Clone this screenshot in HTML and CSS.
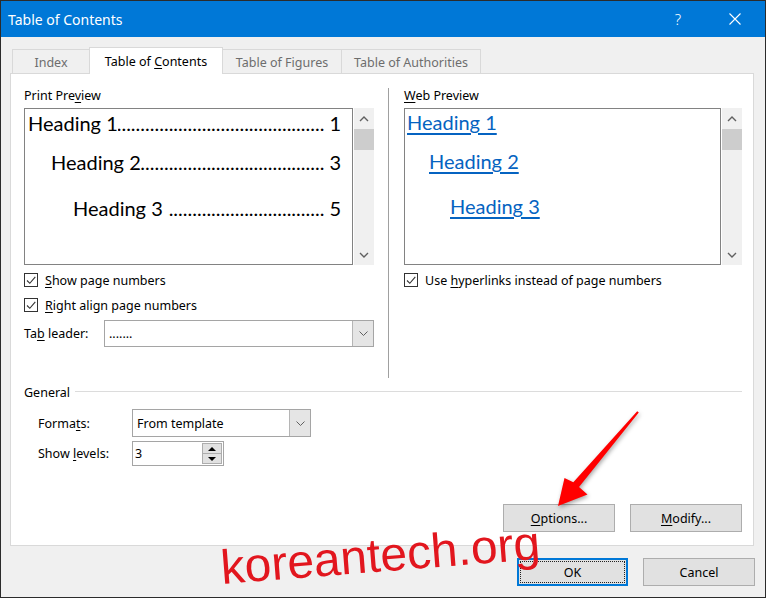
FILE: index.html
```html
<!DOCTYPE html>
<html>
<head>
<meta charset="utf-8">
<link rel="stylesheet" href="styles.css">
</head>
<body>
<div class="window">
  <div class="titlebar">
    <span class="title">Table of Contents</span>
    <div class="tb-btns">
      <span class="tb-btn help">?</span>
      <span class="tb-btn"><svg width="12" height="12" viewBox="0 0 12 12"><path d="M0.5 0.5 L11.5 11.5 M11.5 0.5 L0.5 11.5" stroke="#fff" stroke-width="1.1" fill="none"/></svg></span>
    </div>
  </div>
  <div class="client">
    <div class="tabs">
      <div class="tab t-index"><span>Index</span></div>
      <div class="tab active t-toc"><span>Table of <u>C</u>ontents</span></div>
      <div class="tab t-tof"><span>Table of Figures</span></div>
      <div class="tab t-toa"><span>Table of Authorities</span></div>
    </div>
    <div class="panel">
      <div class="top">
        <div class="col col-left">
          <div class="label">Print Pre<u>v</u>iew</div>
          <div class="preview">
            <div class="pbox toc">
              <div class="toc-row"><span class="hd">Heading 1</span><span class="leader"></span><span class="pg">1</span></div>
              <div class="toc-row l2"><span class="hd">Heading 2</span><span class="leader"></span><span class="pg">3</span></div>
              <div class="toc-row l3"><span class="hd">Heading 3</span><span class="leader sp"></span><span class="pg">5</span></div>
            </div>
            <div class="scroll">
              <div class="sarrow"><svg width="10" height="6" viewBox="0 0 10 6"><path d="M1 5 L5 1 L9 5" stroke="#606060" stroke-width="1.4" fill="none"/></svg></div>
              <div class="thumb"></div>
              <div class="strack"></div>
              <div class="sarrow"><svg width="10" height="6" viewBox="0 0 10 6"><path d="M1 1 L5 5 L9 1" stroke="#606060" stroke-width="1.4" fill="none"/></svg></div>
            </div>
          </div>
          <div class="chk row1"><span class="box"><svg width="12" height="12" viewBox="0 0 12 12"><path d="M2 6.5 L4.8 9.3 L10.3 2.8" stroke="#333" stroke-width="1.1" fill="none"/></svg></span><span><u>S</u>how page numbers</span></div>
          <div class="chk row2"><span class="box"><svg width="12" height="12" viewBox="0 0 12 12"><path d="M2 6.5 L4.8 9.3 L10.3 2.8" stroke="#333" stroke-width="1.1" fill="none"/></svg></span><span><u>R</u>ight align page numbers</span></div>
          <div class="leader-row">
            <span class="tl-label">Ta<u>b</u> leader:</span>
            <div class="select tl-select">
              <span class="val">.......</span>
              <span class="dd"><svg width="9" height="5" viewBox="0 0 9 5"><path d="M0.5 0.5 L4.5 4.5 L8.5 0.5" stroke="#606060" stroke-width="1" fill="none"/></svg></span>
            </div>
          </div>
        </div>
        <div class="sep"></div>
        <div class="col col-right">
          <div class="label"><u>W</u>eb Preview</div>
          <div class="preview">
            <div class="pbox web">
              <div class="w-row"><a>Heading 1</a></div>
              <div class="w-row l2"><a>Heading 2</a></div>
              <div class="w-row l3"><a>Heading 3</a></div>
            </div>
            <div class="scroll">
              <div class="sarrow"><svg width="10" height="6" viewBox="0 0 10 6"><path d="M1 5 L5 1 L9 5" stroke="#606060" stroke-width="1.4" fill="none"/></svg></div>
              <div class="thumb"></div>
              <div class="strack"></div>
              <div class="sarrow"><svg width="10" height="6" viewBox="0 0 10 6"><path d="M1 1 L5 5 L9 1" stroke="#606060" stroke-width="1.4" fill="none"/></svg></div>
            </div>
          </div>
          <div class="chk row1"><span class="box"><svg width="12" height="12" viewBox="0 0 12 12"><path d="M2 6.5 L4.8 9.3 L10.3 2.8" stroke="#333" stroke-width="1.1" fill="none"/></svg></span><span>Use <u>h</u>yperlinks instead of page numbers</span></div>
        </div>
      </div>
      <div class="general">
        <div class="ghead"><span>General</span><span class="gline"></span></div>
        <div class="frow formats">
          <span class="flabel">Forma<u>t</u>s:</span>
          <div class="select f-select">
            <span class="val">From template</span>
            <span class="dd"><svg width="9" height="5" viewBox="0 0 9 5"><path d="M0.5 0.5 L4.5 4.5 L8.5 0.5" stroke="#606060" stroke-width="1" fill="none"/></svg></span>
          </div>
        </div>
        <div class="frow levels">
          <span class="flabel">Show <u>l</u>evels:</span>
          <div class="spin">
            <span class="val">3</span>
            <span class="sbtns">
              <span class="sb"><svg width="8" height="4" viewBox="0 0 8 4"><path d="M0 4 L4 0 L8 4 Z" fill="#000"/></svg></span>
              <span class="sb"><svg width="8" height="4" viewBox="0 0 8 4"><path d="M0 0 L8 0 L4 4 Z" fill="#000"/></svg></span>
            </span>
          </div>
        </div>
      </div>
      <div class="actions">
        <div class="btn"><span><u>O</u>ptions...</span></div>
        <div class="btn"><span><u>M</u>odify...</span></div>
      </div>
    </div>
    <div class="footer">
      <div class="btn ok"><span class="focus">OK</span></div>
      <div class="btn cancel">Cancel</div>
    </div>
  </div>
  <svg class="arrow" width="766" height="598" viewBox="0 0 766 598">
    <polygon points="637.2,411.3 638.8,412.6 579,487 587.5,494.5 558,506 564.5,478 573.3,482.3" fill="#ff0000"/>
  </svg>
  <div class="watermark">koreantech.org</div>
</div>
</body>
</html>
```
FILE: styles.css
```css
* { box-sizing: border-box; }
body {
  margin: 0;
  font-family: "Noto Sans", "Open Sans", sans-serif;
  font-size: 12.5px;
  color: #000;
}
u { text-decoration: underline; text-underline-offset: 2px; }

.window {
  position: relative;
  width: 766px;
  height: 598px;
  border: 1px solid #2b2b2b;
  background: #f0f0f0;
  overflow: hidden;
}

.titlebar {
  height: 36px;
  background: #0078d7;
  color: #fff;
  display: flex;
  align-items: center;
  padding-left: 7px;
}
.title { font-size: 14px; }
.tb-btns { margin-left: auto; display: flex; gap: 11px; margin-right: 7px; }
.tb-btn {
  width: 46px;
  height: 36px;
  display: flex;
  align-items: center;
  justify-content: center;
  font-size: 15px;
  font-weight: 300;
}

.client { padding-top: 10px; }

.tabs {
  position: relative;
  z-index: 1;
  display: flex;
  align-items: flex-end;
  height: 26px;
  padding-left: 11px;
}
.tab {
  height: 24px;
  border: 1px solid #d9d9d9;
  border-bottom: 0;
  background: #f0f0f0;
  color: #6d6d6d;
  display: flex;
  align-items: center;
  justify-content: center;
  padding-top: 2px;
  margin-left: -1px;
}
.tab:first-child { margin-left: 0; }
.tab.active {
  height: 27px;
  background: #fff;
  color: #000;
  margin-bottom: -1px;
  padding-top: 1px;
}
.t-index { width: 78px; }
.t-toc { width: 134px; }
.t-tof { width: 120px; }
.t-toa { width: 140px; }

.panel {
  margin-left: 9px;
  width: 744px;
  height: 473px;
  border: 1px solid #d9d9d9;
  background: #fff;
  padding: 14px 11px 0 13px;
}

.top { display: flex; height: 290px; }
.col { display: flex; flex-direction: column; }
.col-left { width: 350px; }
.col-right { width: 338px; }
.sep { width: 1px; background: #a0a0a0; margin: 0 15px 0 14px; }

.label { height: 16px; line-height: 16px; }

.preview { margin-top: 4px; height: 157px; display: flex; gap: 1px; }
.pbox { flex: 1; min-width: 0; border: 1px solid #828282; background: #fff; }
.scroll { width: 20px; background: #f0f0f0; display: flex; flex-direction: column; }
.sarrow { height: 21px; display: flex; align-items: center; justify-content: center; }
.thumb { height: 21px; background: #cdcdcd; }
.strack { flex: 1; }

.toc {
  padding: 2px 11px 0 3px;
  font-family: Lato, "Open Sans", sans-serif;
  font-size: 20px;
  line-height: 24px;
}
.toc-row { display: flex; white-space: nowrap; }
.toc-row.l2 { margin-top: 15px; padding-left: 23px; }
.toc-row.l3 { margin-top: 22px; padding-left: 45px; }
.leader {
  flex: 1;
  min-width: 0;
  overflow: hidden;
  direction: rtl;
  white-space: nowrap;
}
.leader::before {
  content: "..........................................................................";
}
.leader.sp { margin-left: 5px; }
.pg { padding-left: 5px; }

.web {
  padding: 1px 0 0 2px;
  font-family: Lato, "Open Sans", sans-serif;
  font-size: 20px;
  line-height: 24px;
}
.web a { color: #0563c1; text-decoration: underline; text-underline-offset: 3px; }
.w-row.l2 { margin-top: 15px; padding-left: 22px; }
.w-row.l3 { margin-top: 21px; padding-left: 43px; }

.chk { display: flex; align-items: center; height: 16px; gap: 7px; }
.chk.row1 { margin-top: 7px; }
.chk.row2 { margin-top: 9px; }
.box {
  width: 14px;
  height: 14px;
  border: 1px solid #333;
  background: #fff;
  display: flex;
  align-items: center;
  justify-content: center;
}

.leader-row { display: flex; align-items: center; margin-top: 7px; height: 27px; }
.tl-label { width: 80px; }

.select { display: flex; border: 1px solid #a5a5a5; background: #fff; }
.select .val { flex: 1; padding-left: 4px; display: flex; align-items: center; }
.select .dd {
  width: 21px;
  background: #e5e5e5;
  border-left: 1px solid #b5b5b5;
  display: flex;
  align-items: center;
  justify-content: center;
}
.tl-select { width: 270px; height: 27px; }
.f-select { width: 179px; height: 28px; }

.general { margin-top: 6px; }
.ghead { display: flex; align-items: center; height: 16px; }
.gline { flex: 1; height: 1px; background: #dcdcdc; margin-left: 5px; margin-top: -1px; }
.frow { display: flex; align-items: center; padding-left: 14px; }
.flabel { width: 94px; }
.frow.formats { margin-top: 9px; height: 28px; }
.frow.levels { margin-top: 4px; height: 25px; }

.spin { display: flex; width: 92px; height: 25px; border: 1px solid #a5a5a5; background: #fff; }
.spin .val { flex: 1; padding-left: 2px; display: flex; align-items: center; }
.sbtns { width: 21px; display: flex; flex-direction: column; padding: 1px 1px 1px 0; }
.sb {
  flex: 1;
  background: #e1e1e1;
  border: 1px solid #adadad;
  display: flex;
  align-items: center;
  justify-content: center;
}
.sb + .sb { border-top: 0; }

.actions { display: flex; justify-content: flex-end; gap: 15px; margin-top: 38px; }
.btn {
  width: 112px;
  height: 28px;
  background: #e1e1e1;
  border: 1px solid #adadad;
  display: flex;
  align-items: center;
  justify-content: center;
}

.footer { display: flex; justify-content: flex-end; gap: 15px; margin-top: 12px; padding-right: 10px; }
.ok { width: 111px; border: 2px solid #0078d7; padding: 1px; }
.focus {
  width: 100%;
  height: 100%;
  border: 1px dotted #222;
  display: flex;
  align-items: center;
  justify-content: center;
}

.arrow {
  position: absolute;
  left: -1px;
  top: -1px;
  pointer-events: none;
  filter: drop-shadow(1px 2px 2px rgba(0,0,0,0.35));
}
.watermark {
  position: absolute;
  left: 221px;
  top: 543px;
  font-family: "Liberation Sans", Arial, sans-serif;
  font-size: 48px;
  line-height: 48px;
  color: #e2161e;
  white-space: nowrap;
  transform-origin: 0 41px;
  transform: rotate(-4.5deg);
}
```
